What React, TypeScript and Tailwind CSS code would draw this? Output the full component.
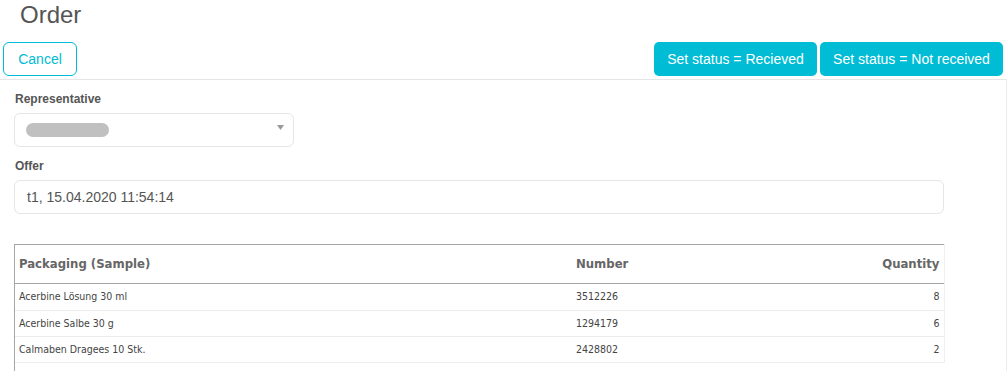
import React from "react";

const rows = [
  { name: "Acerbine Lösung 30 ml", number: "3512226", qty: 8 },
  { name: "Acerbine Salbe 30 g", number: "1294179", qty: 6 },
  { name: "Calmaben Dragees 10 Stk.", number: "2428802", qty: 2 },
];

const OrderPage = () => {
  return (
    <div className="w-[1007px] h-[371px] overflow-hidden bg-white font-['Liberation_Sans',Arial,sans-serif]">
      {/* title */}
      <div className="h-[42px] pl-5 pt-[3px]">
        <h1 className="text-[24px] leading-[24px] text-[#555]">Order</h1>
      </div>

      {/* toolbar */}
      <div className="flex justify-between pl-[3px] pr-[4px] pb-[3px] border-b border-[#e6e6e6]">
        <button className="w-[74px] h-[34px] rounded-[6px] border border-[#00bcd4] text-[#00bcd4] text-[14px] bg-white">
          Cancel
        </button>
        <div className="flex gap-[3px]">
          <button className="h-[34px] w-[163px] rounded-[5px] bg-[#00bcd4] text-white text-[14px]">
            Set status = Recieved
          </button>
          <button className="h-[34px] w-[183px] rounded-[5px] bg-[#00bcd4] text-white text-[14px]">
            Set status = Not received
          </button>
        </div>
      </div>

      {/* body */}
      <div className="h-[300px] border-r border-[#ececec] pl-[14px] pt-[12px]">
        <div className="text-[12px] leading-[14px] font-bold text-[#555] pl-px">Representative</div>
        <div className="mt-[7px] w-[280px] h-[34px] rounded-[6px] border border-[#e6e6e6] flex items-center justify-between pl-[11px] pr-[9px]">
          <div className="w-[83px] h-[14px] rounded-full bg-[#c0c0c0]" />
          <svg width="7" height="5" viewBox="0 0 7 5" className="mb-[6px]">
            <path d="M0 0 L7 0 L3.5 5 Z" fill="#999" />
          </svg>
        </div>

        <div className="mt-[12px] text-[12px] leading-[14px] font-bold text-[#555] pl-px">Offer</div>
        <div className="mt-[7px] w-[930px] h-[34px] rounded-[6px] border border-[#e6e6e6] flex items-center pl-[12px] text-[14px] text-[#555]">
          t1, 15.04.2020 11:54:14
        </div>

        <div className="mt-[30px] w-[930px] border-l border-[#a6a6a6] pb-[20px]">
          <table className="w-[929px] table-fixed border-collapse font-['DejaVu_Sans_Condensed','DejaVu_Sans',sans-serif]">
            <colgroup>
              <col className="w-[556px]" />
              <col className="w-[200px]" />
              <col className="w-[173px]" />
            </colgroup>
            <thead>
              <tr className="h-[39px] border-t border-b border-[#a6a6a6]">
                <th className="text-left pl-[4px] text-[13px] font-bold text-[#666]">Packaging (Sample)</th>
                <th className="text-left pl-[5px] text-[13px] font-bold text-[#666]">Number</th>
                <th className="text-right pr-[4px] text-[13px] font-bold text-[#666] border-r border-[#f0f0f0]">Quantity</th>
              </tr>
            </thead>
            <tbody>
              {rows.map((r) => (
                <tr key={r.number} className="h-[26px] first:h-[27px] border-b border-[#ececec]">
                  <td className="pl-[4px] text-[10.5px] text-[#444]">{r.name}</td>
                  <td className="pl-[5px] text-[10.5px] text-[#444]">{r.number}</td>
                  <td className="pr-[4px] text-right text-[10.5px] text-[#444] border-r border-[#f0f0f0]">{r.qty}</td>
                </tr>
              ))}
            </tbody>
          </table>
        </div>
      </div>
    </div>
  );
};

export default function App() {
  return <OrderPage />;
}
